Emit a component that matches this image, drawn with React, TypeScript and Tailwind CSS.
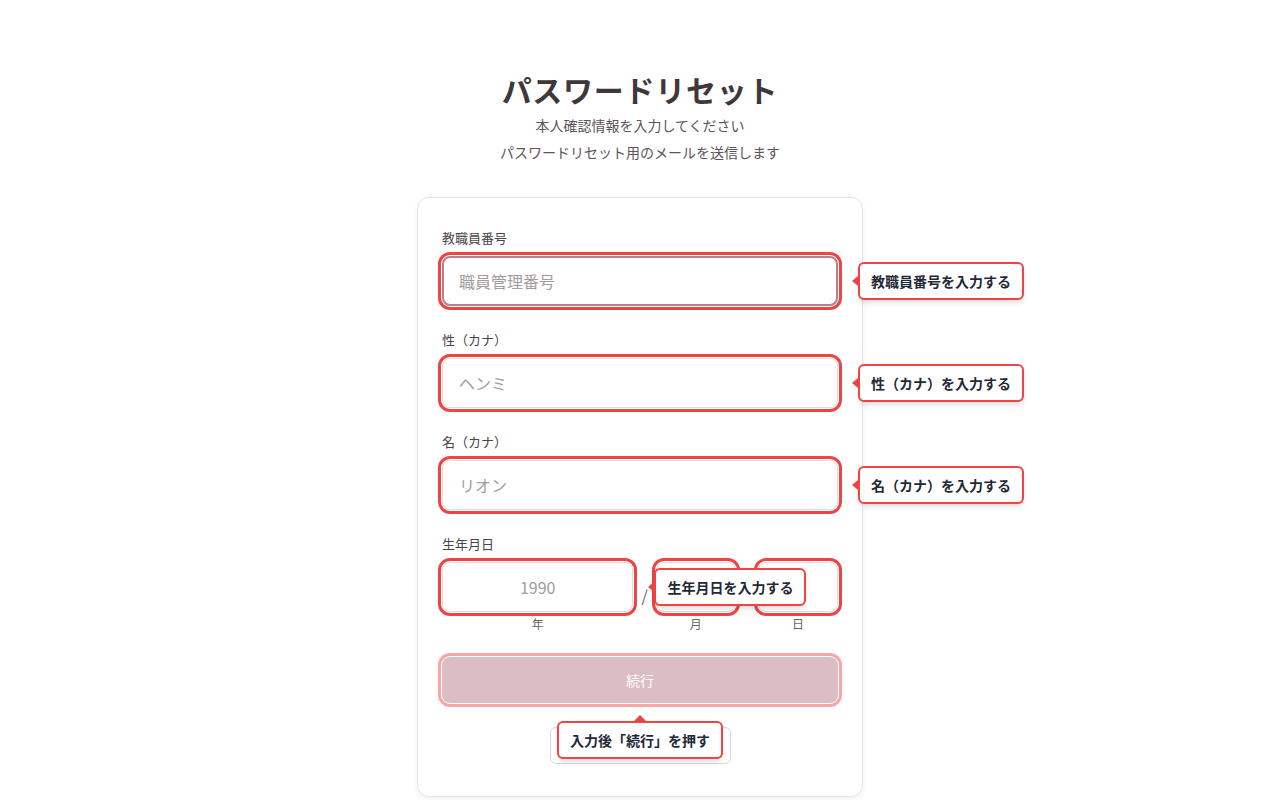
import React from 'react'

const font = { fontFamily: '"Noto Sans CJK JP", "Noto Sans", sans-serif' }

// tooltip bubble with a red arrow on the left side
function SideTip({ text, className = '' }: { text: string; className?: string }) {
  return (
    <div className={`absolute top-1/2 -translate-y-1/2 z-10 ${className}`}>
      <div className="relative whitespace-nowrap rounded-md border-2 border-[#ef4444] bg-white px-[11px] py-[7px] text-sm leading-5 font-bold text-[#1f2937] shadow-md">
        {text}
        <span className="absolute -left-[8px] top-1/2 -translate-y-1/2 h-0 w-0 border-y-[5px] border-r-[6px] border-y-transparent border-r-[#ef4444]" />
      </div>
    </div>
  )
}

function Field({ label, placeholder, focused, tip }: { label: string; placeholder: string; focused?: boolean; tip: string }) {
  return (
    <div>
      <label className="mb-2 block text-[13px] leading-5 text-[#4b4345]">{label}</label>
      <div className="relative">
        <input
          placeholder={placeholder}
          className={`h-[50px] w-full rounded-lg bg-white px-4 text-base text-[#3f3739] placeholder:text-[#a39c9e] outline-3 outline-[#ef4444] outline-offset-1 ${
            focused ? 'border-2 border-[#b5808f] px-[15px]' : 'border border-[#e3dbdd]'
          }`}
        />
        <SideTip text={tip} className="left-[calc(100%+20px)]" />
      </div>
    </div>
  )
}

function DateBox({ placeholder, unit, wide }: { placeholder?: string; unit: string; wide?: boolean }) {
  return (
    <div className={wide ? 'flex-1' : 'w-20'}>
      <input
        placeholder={placeholder}
        className="h-[50px] w-full rounded-lg border border-[#e3dbdd] bg-white px-2 text-center text-base placeholder:text-[#a39c9e] outline-3 outline-[#ef4444] outline-offset-1"
      />
      <div className="mt-1 text-center text-xs leading-4 text-[#6b6365]">{unit}</div>
    </div>
  )
}

export default function App() {
  return (
    <div className="min-h-screen bg-white pt-[71px]" style={font}>
      <div className="mx-auto flex w-[446px] flex-col items-center">
        <h1 className="mb-[5px] text-3xl leading-9 font-bold tracking-wide text-[#3f3739]">パスワードリセット</h1>
        <p className="text-sm leading-[27px] text-[#5c5456]">本人確認情報を入力してください</p>
        <p className="text-sm leading-[27px] text-[#5c5456]">パスワードリセット用のメールを送信します</p>

        <div className="mt-[31px] w-full rounded-xl border border-[#ebe2e4] bg-white px-6 pt-[30px] pb-8 shadow-[0_2px_6px_rgba(0,0,0,0.06)]">
          <div className="flex flex-col gap-6">
            <Field label="教職員番号" placeholder="職員管理番号" focused tip="教職員番号を入力する" />
            <Field label="性（カナ）" placeholder="ヘンミ" tip="性（カナ）を入力する" />
            <Field label="名（カナ）" placeholder="リオン" tip="名（カナ）を入力する" />

            <div>
              <label className="mb-2 block text-[13px] leading-5 text-[#4b4345]">生年月日</label>
              <div className="relative flex items-start gap-2">
                <div className="relative flex-1">
                  <DateBox placeholder="1990" unit="年" wide />
                  <SideTip text="生年月日を入力する" className="left-[calc(100%+21px)] !top-[25px]" />
                </div>
                <span className="mt-[25px] text-base leading-4 text-[#6b6365]">/</span>
                <DateBox unit="月" />
                <span className="mt-[25px] text-base leading-4 text-[#6b6365]">/</span>
                <DateBox unit="日" />
              </div>
            </div>
          </div>

          <button className="mt-[25px] h-[46px] w-full rounded-lg bg-[#dbbdc5] text-sm text-white outline-3 outline-[#f8a5a5] outline-offset-1">
            続行
          </button>

          <div className="relative mt-6 flex justify-center">
            <button className="h-[37px] w-[181px] rounded-md border border-[#ddd6d8] bg-white text-sm text-[#4b4345]">
              ログイン画面へ戻る
            </button>
            <div className="absolute -top-[6px] left-1/2 z-10 -translate-x-1/2">
              <div className="relative whitespace-nowrap rounded-md border-2 border-[#ef4444] bg-white px-[11px] py-[7px] text-sm leading-5 font-bold text-[#1f2937] shadow-md">
                入力後「続行」を押す
                <span className="absolute -top-[8px] left-1/2 -translate-x-1/2 h-0 w-0 border-x-[6px] border-b-[6px] border-x-transparent border-b-[#ef4444]" />
              </div>
            </div>
          </div>
        </div>
      </div>
    </div>
  )
}
